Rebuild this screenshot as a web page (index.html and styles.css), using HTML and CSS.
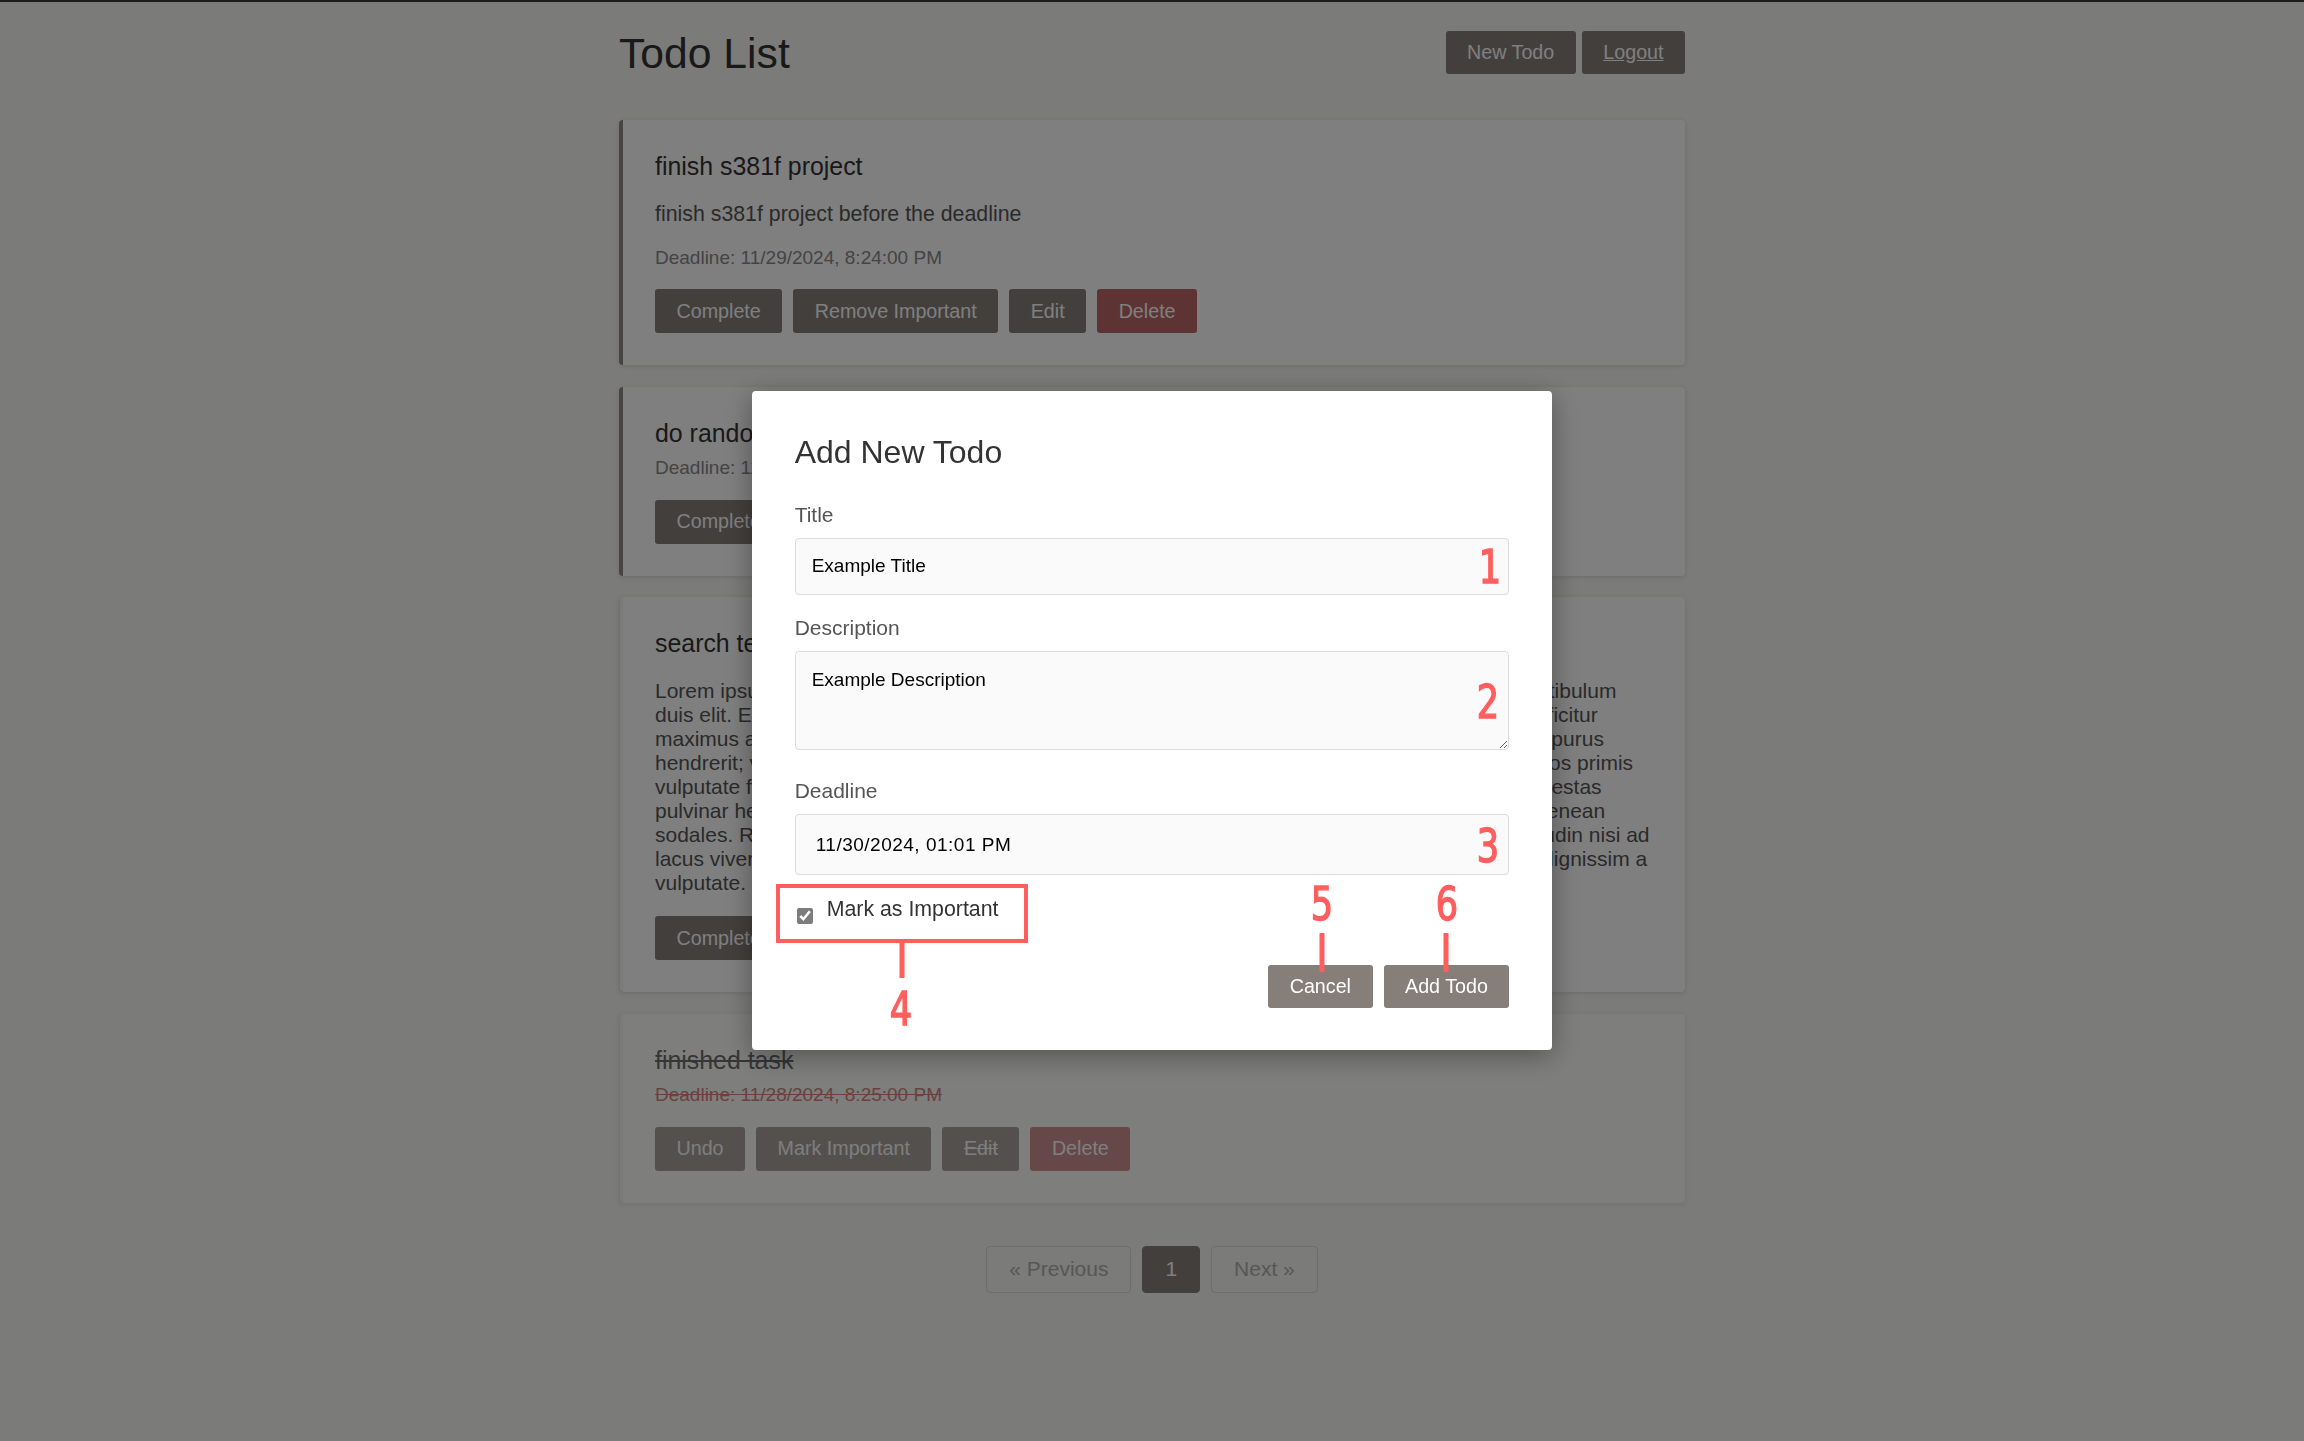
FILE: index.html
```html
<!DOCTYPE html>
<html lang="en">
<head>
<meta charset="utf-8">
<title>Todo List</title>
<link rel="stylesheet" href="styles.css">
</head>
<body>
<div class="topline"></div>
<div class="container">
  <header class="page-header">
    <h1>Todo List</h1>
    <div class="header-actions">
      <button class="btn">New Todo</button>
      <a class="btn btn-link" href="#">Logout</a>
    </div>
  </header>

  <div class="todo-list">
    <div class="todo important">
      <h3>finish s381f project</h3>
      <p class="desc desc-short">finish s381f project before the deadline</p>
      <p class="deadline">Deadline: 11/29/2024, 8:24:00 PM</p>
      <div class="actions">
        <button class="btn">Complete</button>
        <button class="btn">Remove Important</button>
        <button class="btn">Edit</button>
        <button class="btn btn-danger">Delete</button>
      </div>
    </div>

    <div class="todo important">
      <h3>do random things</h3>
      <p class="deadline">Deadline: 11/30/2024, 11:59:00 PM</p>
      <div class="actions">
        <button class="btn">Complete</button>
        <button class="btn">Remove Important</button>
        <button class="btn">Edit</button>
        <button class="btn btn-danger">Delete</button>
      </div>
    </div>

    <div class="todo">
      <h3>search test</h3>
      <p class="desc">Lorem ipsum odor amet, consectetuer adipiscing elit. Torquent luctus magna nunc a ultricies vestibulum duis elit. Eros lacinia nulla fames inceptos tempus; donec eget morbi leo pharetra sagittis, nisl efficitur maximus ac metus curabitur vehicula mollis; quam montes ornare conubia lectus, tortor sit amet purus hendrerit; vivamus nam interdum venenatis, penatibus ligula ridiculus nec class ultrices himenaeos primis vulputate fringilla tellus facilisis aliquet condimentum risus blandit, potenti mattis enim semper egestas pulvinar hendrerit scelerisque cursus feugiat natoque placerat euismod dapibus mi, id tristique Aenean sodales. Rhoncus volutpat porta accumsan tincidunt lobortis convallis augue orci et proin sollicitudin nisi ad lacus viverra gravida quisque fusce mauris bibendum, imperdiet ullamcorper nibh laoreet netus dignissim a vulputate.</p>
      <div class="actions">
        <button class="btn">Complete</button>
        <button class="btn">Mark Important</button>
        <button class="btn">Edit</button>
        <button class="btn btn-danger">Delete</button>
      </div>
    </div>

    <div class="todo done">
      <h3>finished task</h3>
      <p class="deadline">Deadline: 11/28/2024, 8:25:00 PM</p>
      <div class="actions">
        <button class="btn">Undo</button>
        <button class="btn">Mark Important</button>
        <button class="btn strike">Edit</button>
        <button class="btn btn-danger">Delete</button>
      </div>
    </div>
  </div>

  <nav class="pagination">
    <a class="page" href="#">&laquo; Previous</a>
    <a class="page active" href="#">1</a>
    <a class="page" href="#">Next &raquo;</a>
  </nav>
</div>

<div class="overlay">
  <div class="modal">
    <h2>Add New Todo</h2>
    <div class="field">
      <label for="t-title">Title</label>
      <input id="t-title" class="input" type="text" value="Example Title">
    </div>
    <div class="field field-tall">
      <label for="t-desc">Description</label>
      <textarea id="t-desc" class="input area">Example Description</textarea>
    </div>
    <div class="field">
      <label for="t-dead">Deadline</label>
      <input id="t-dead" class="input dt" type="text" value="11/30/2024, 01:01 PM">
    </div>
    <label class="check-row"><input type="checkbox" checked><span>Mark as Important</span></label>
    <div class="modal-actions">
      <button class="btn">Cancel</button>
      <button class="btn">Add Todo</button>
    </div>

    <span class="note n1">1</span>
    <span class="note n2">2</span>
    <span class="note n3">3</span>
    <div class="note-box"></div>
    <div class="note-line l4"></div>
    <span class="note n4">4</span>
    <span class="note n5">5</span>
    <div class="note-line l5"></div>
    <span class="note n6">6</span>
    <div class="note-line l6"></div>
  </div>
</div>
</body>
</html>
```

FILE: styles.css
```css
html, body {
  margin: 0;
  padding: 0;
}

body {
  font-family: "Liberation Sans", Arial, Helvetica, sans-serif;
  background: #f6f6f3;
  color: #333;
  min-height: 1441px;
}

.topline {
  position: fixed;
  top: 0;
  left: 0;
  right: 0;
  height: 2px;
  background: #1c1c1c;
  z-index: 20;
}

.container {
  width: 1066px;
  margin: 0 auto;
  padding-top: 29px;
}

.page-header {
  display: flex;
  justify-content: space-between;
  align-items: flex-start;
  margin-bottom: 42px;
}

.page-header h1 {
  margin: 0;
  font-size: 42.67px;
  line-height: 49px;
  font-weight: normal;
  color: #333;
}

.header-actions {
  display: flex;
  gap: 6px;
  margin-top: 2px;
}

.btn {
  display: inline-flex;
  align-items: center;
  justify-content: center;
  box-sizing: border-box;
  height: 44px;
  padding: 0 21.5px;
  margin: 0;
  border: none;
  border-radius: 3px;
  background: #867e79;
  color: #fff;
  font-family: "Liberation Sans", Arial, Helvetica, sans-serif;
  font-size: 19.7px;
  text-decoration: none;
  cursor: pointer;
}

.page-header .btn {
  height: 43px;
}

.btn-link {
  text-decoration: underline;
}

.btn-danger {
  background: #ba6666;
}

.strike {
  text-decoration: line-through;
}

.todo-list {
  display: flex;
  flex-direction: column;
  gap: 21.5px;
}

.todo {
  background: #fff;
  background-clip: padding-box;
  border-left: 4px solid transparent;
  border-radius: 4px;
  box-shadow: 0 1px 5px rgba(0, 0, 0, 0.12);
  padding: 32px;
}

.todo.important {
  border-left-color: #8f8883;
  background-clip: border-box;
}

.todo h3 {
  margin: 0 0 10px;
  font-size: 24.9px;
  line-height: 28.7px;
  font-weight: normal;
  color: #333;
}

.desc {
  margin: 21px 0;
  font-size: 21px;
  line-height: 24px;
  color: #555;
}

.desc-short {
  font-size: 21.33px;
}

.deadline {
  margin: 0 0 21px;
  font-size: 19px;
  line-height: 21.5px;
  color: #888;
}

.actions {
  display: flex;
  gap: 11px;
}

.todo.done {
  opacity: 0.7;
}

.todo.done h3 {
  text-decoration: line-through;
}

.todo.done .deadline {
  color: #c9514c;
  text-decoration: line-through;
}

.pagination {
  display: flex;
  justify-content: center;
  gap: 11px;
  margin-top: 43px;
}

.page {
  display: flex;
  align-items: center;
  box-sizing: border-box;
  height: 47px;
  padding: 0 22px;
  border: 1px solid #dcdcda;
  border-radius: 4px;
  font-size: 21px;
  color: #aeaeae;
  text-decoration: none;
}

.page.active {
  background: #867e79;
  border-color: #867e79;
  color: #fff;
}

.overlay {
  position: fixed;
  inset: 0;
  background: rgba(0, 0, 0, 0.5);
  display: flex;
  align-items: center;
  justify-content: center;
  z-index: 10;
}

.modal {
  position: relative;
  width: 800px;
  box-sizing: border-box;
  padding: 43px 42.67px 42px;
  background: #fff;
  border-radius: 4px;
  box-shadow: 0 6px 28px rgba(0, 0, 0, 0.35);
}

.modal h2 {
  margin: 0 0 32px;
  font-size: 32px;
  line-height: 36.8px;
  font-weight: normal;
  color: #333;
}

.field {
  margin-bottom: 21.33px;
}

.field-tall {
  margin-bottom: 28.5px;
}

.field label {
  display: block;
  font-size: 21px;
  line-height: 24px;
  color: #555;
  margin-bottom: 11px;
}

.input {
  display: block;
  width: 100%;
  box-sizing: border-box;
  height: 57px;
  margin: 0;
  padding: 0 16px;
  border: 1px solid #dcdcdc;
  border-radius: 4px;
  background: #fafafa;
  font-family: "Liberation Sans", Arial, Helvetica, sans-serif;
  font-size: 19px;
  color: #000;
  outline: none;
}

.input.area {
  height: 99px;
  padding: 17px 16px 16px;
  resize: vertical;
  line-height: normal;
}

.input.dt {
  height: 61.7px;
  padding-left: 20px;
  letter-spacing: 0.5px;
}

.check-row {
  display: flex;
  align-items: flex-start;
  margin-top: 3px;
  font-size: 21.33px;
  line-height: 24.5px;
  color: #333;
}

.check-row input {
  width: 16px;
  height: 16px;
  margin: 11px 13.5px 0 2.5px;
  accent-color: #7d7d7d;
}

.modal-actions {
  display: flex;
  justify-content: flex-end;
  gap: 11px;
  margin-top: 41px;
}

.modal-actions .btn {
  height: 43px;
}

.note {
  position: absolute;
  color: #ff5e5e;
  font-family: "Liberation Sans Narrow", "DejaVu Sans Condensed", "Liberation Sans", sans-serif;
  font-stretch: condensed;
  font-weight: normal;
  -webkit-text-stroke: 1.4px #ff5e5e;
  font-size: 46px;
  line-height: 1;
  transform: translate(-50%, -50%) scaleX(0.85);
}

.n1 { left: 738px; top: 175.5px; }
.n2 { left: 736px; top: 311.3px; }
.n3 { left: 736px; top: 455px; }
.n4 { left: 149px; top: 618px; }
.n5 { left: 570px; top: 513px; }
.n6 { left: 695px; top: 513px; }

.note-box {
  position: absolute;
  left: 23.5px;
  top: 493px;
  width: 252.5px;
  height: 59.3px;
  box-sizing: border-box;
  border: 4.5px solid #ff5e5e;
}

.note-line {
  position: absolute;
  width: 5px;
  background: #ff5e5e;
  transform: translateX(-50%);
}

.l4 { left: 149.5px; top: 552px; height: 35px; }
.l5 { left: 570.4px; top: 542px; height: 39px; }
.l6 { left: 694.4px; top: 542px; height: 39px; }
```
